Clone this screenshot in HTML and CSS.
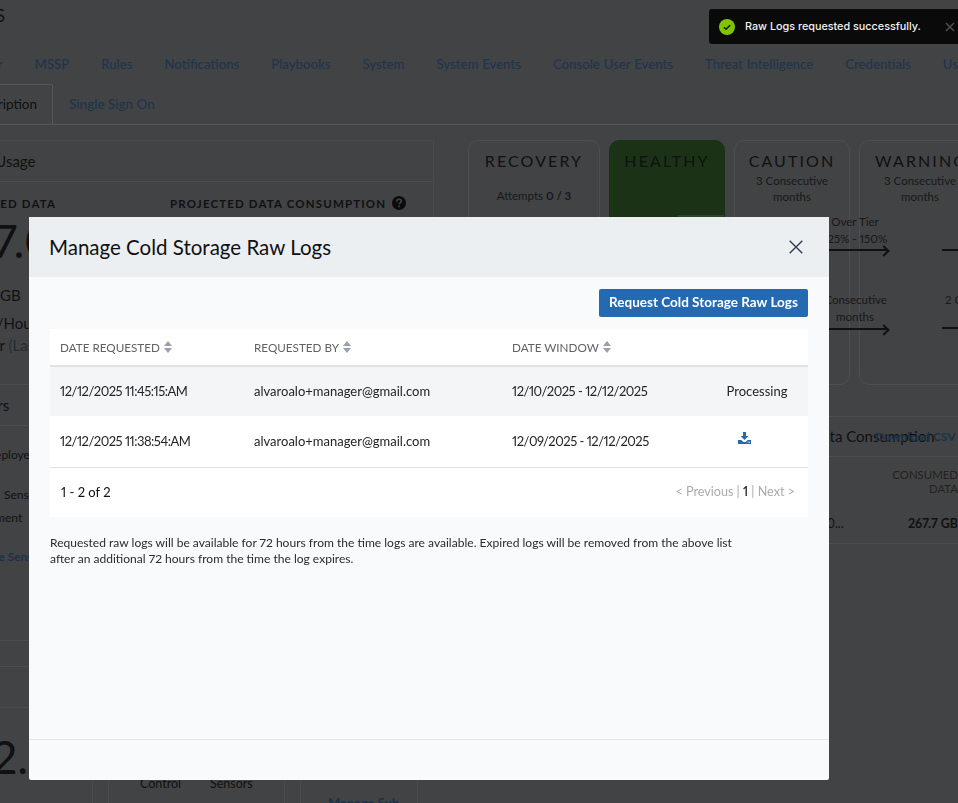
FILE: index.html
```html
<!DOCTYPE html>
<html lang="en">
<head>
<meta charset="utf-8">
<title>Manage Cold Storage Raw Logs</title>
<link rel="stylesheet" href="styles.css">
</head>
<body>
<div class="page">
  <header class="page-head">SETTINGS</header>
  <nav class="tabs">
    <a class="tab tab-first">Sensor</a><a class="tab">MSSP</a><a class="tab">Rules</a><a class="tab">Notifications</a><a class="tab">Playbooks</a><a class="tab">System</a><a class="tab">System Events</a><a class="tab">Console User Events</a><a class="tab">Threat Intelligence</a><a class="tab">Credentials</a><a class="tab">Users</a>
  </nav>
  <nav class="subtabs">
    <span class="subtab-active">Subscription</span><a class="tab subtab-link">Single Sign On</a>
  </nav>
  <main class="content">
    <section class="left">
      <div class="usage-panel">
        <div class="panel-title">Data Usage</div>
        <div class="metric-labels"><span class="metric-a">CONSUMED DATA</span><span class="metric-b">PROJECTED DATA CONSUMPTION</span>
          <svg class="help" width="14" height="14" viewBox="0 0 14 14"><circle cx="7" cy="7" r="7" fill="#0c0c0c"/><path d="M4.8 5.4c0-1.3 1-2.1 2.3-2.1 1.2 0 2.2.8 2.2 1.9 0 1.7-2.1 1.6-2.1 3.1" fill="none" stroke="#444" stroke-width="1.6"/><rect x="6.2" y="9.5" width="1.7" height="1.7" fill="#444"/></svg>
        </div>
        <div class="big-num">267.0</div>
        <div class="stub stub-gb">GB</div>
        <div class="stub stub-hour">GB/Hour</div>
        <div class="stub stub-last">Per Hour <span class="muted">(Last)</span></div>
      </div>
      <div class="sensors-head">Sensors</div>
      <div class="sensors-body">
        <div class="stub stub-dep">Deployed</div>
        <div class="stub stub-sens">Sensors</div>
        <div class="stub stub-ment">Management</div>
        <div class="stub stub-link">Manage Sensors</div>
      </div>
      <div class="strip strip-a"></div>
      <div class="strip strip-b"></div>
      <div class="bottom-row">
        <div class="big-two">12.0</div>
        <div class="mini-card mini-a"><span>Control</span><span>Sensors</span></div>
        <div class="mini-card mini-b"><strong>Manage Sub</strong></div>
      </div>
    </section>
    <section class="right">
      <div class="status-row">
        <div class="status"><h3>RECOVERY</h3><p class="attempts">Attempts <b>0 / 3</b></p></div>
        <div class="status status-healthy"><h3>HEALTHY</h3><i class="badge"></i></div>
        <div class="status"><h3>CAUTION</h3><p>3 Consecutive months</p></div>
        <div class="status status-warn"><h3>WARNING</h3><p>3 Consecutive months</p></div>
        <div class="flow flow-a"><span>Over Tier<br>125% - 150%</span><i class="arrow"></i></div>
        <div class="flow flow-b"><span>2 Consecutive<br>months</span><i class="arrow"></i></div>
        <i class="line line-a"></i>
        <i class="line line-b"></i>
        <span class="flow-c">2 Consecutive</span>
      </div>
      <div class="data-panel">
        <div class="data-head"><span>Data Consumption</span><a class="csv">Download CSV</a></div>
        <div class="data-cols"><span>CONSUMED<br>DATA</span></div>
        <div class="data-row"><span class="trunc">2025-10...</span><b>267.7 GB</b></div>
      </div>
    </section>
  </main>
</div>

<div class="toast">
  <svg width="16" height="16" viewBox="0 0 16 16"><circle cx="8" cy="8" r="8" fill="#7ec400"/><path d="M4.8 8.2l2.2 2.1 4.2-4.2" fill="none" stroke="#17230a" stroke-width="1.5"/></svg>
  <span class="toast-text">Raw Logs requested successfully.</span>
  <svg class="toast-x" width="10" height="10" viewBox="0 0 10 10"><path d="M1 1l8 8M9 1l-8 8" stroke="#4b4d50" stroke-width="1.6"/></svg>
</div>

<div class="backdrop">
  <div class="modal">
    <div class="modal-head">
      <h2>Manage Cold Storage Raw Logs</h2>
      <svg width="14" height="14" viewBox="0 0 14 14"><path d="M.7.7l12.6 12.6M13.3.7L.7 13.3" stroke="#2f3d4c" stroke-width="1.4"/></svg>
    </div>
    <div class="modal-body">
      <div class="actions"><button class="btn">Request Cold Storage Raw Logs</button></div>
      <div class="table-card">
        <table>
          <colgroup><col class="c1"><col class="c2"><col class="c3"><col class="c4"></colgroup>
          <thead>
            <tr>
              <th>DATE REQUESTED <svg class="sort" width="8" height="12" viewBox="0 0 8 12"><path d="M4 0l4 5H0zM4 12L0 7h8z"/></svg></th>
              <th>REQUESTED BY <svg class="sort" width="8" height="12" viewBox="0 0 8 12"><path d="M4 0l4 5H0zM4 12L0 7h8z"/></svg></th>
              <th>DATE WINDOW <svg class="sort" width="8" height="12" viewBox="0 0 8 12"><path d="M4 0l4 5H0zM4 12L0 7h8z"/></svg></th>
              <th></th>
            </tr>
          </thead>
          <tbody>
            <tr class="shade">
              <td class="num">12/12/2025 11:45:15:AM</td>
              <td>alvaroalo+manager@gmail.com</td>
              <td class="num">12/10/2025 - 12/12/2025</td>
              <td class="center">Processing</td>
            </tr>
            <tr>
              <td class="num">12/12/2025 11:38:54:AM</td>
              <td>alvaroalo+manager@gmail.com</td>
              <td class="num">12/09/2025 - 12/12/2025</td>
              <td class="center"><svg class="dl" width="13" height="12" viewBox="0 0 13 12"><path d="M5 0h3v4h2.500L6.500 8 2.500 4H5z" fill="#2569b1"/><path d="M0 8h3.200l2.300 2h2l2.300-2H13v4H0z" fill="#2569b1"/><rect x="9.500" y="9.700" width="1" height="1" fill="#fff"/><rect x="11" y="9.700" width="1" height="1" fill="#fff"/></svg></td>
            </tr>
          </tbody>
        </table>
        <div class="table-foot"><span>1 - 2 of 2</span><span class="pager">&lt; Previous | <b>1</b> | Next &gt;</span></div>
      </div>
      <p class="note">Requested raw logs will be available for 72 hours from the time logs are available. Expired logs will be removed from the above list<br>after an additional 72 hours from the time the log expires.</p>
    </div>
    <div class="modal-foot"></div>
  </div>
</div>
</body>
</html>
```
FILE: styles.css
```css
* { box-sizing: border-box; }
html, body { margin: 0; height: 100%; }
body {
  width: 958px; height: 803px; overflow: hidden;
  background: #424344; color: #101112;
  font-family: Lato, "Liberation Sans", sans-serif;
  font-variant-numeric: proportional-nums;
}
.page { margin-left: -100px; width: 1200px; }

.page-head { height: 45px; padding-top: 5px; font-size: 17px; width: 105px; text-align: right; white-space: nowrap; line-height: 22px; }

.tabs { display: flex; gap: 32px; height: 37px; align-items: center; white-space: nowrap; padding-left: 63px; }
.tab { font-size: 13.2px; font-weight: 500; word-spacing: 0.5px; color: #1f344e; }
.subtabs { display: flex; height: 43px; border-bottom: 1px solid #555657; align-items: flex-end; }
.subtab-active { width: 153px; height: 40px; border-right: 1px solid #555657; border-top: 1px solid #555657; font-size: 13.5px; line-height: 38px; text-align: right; padding-right: 15px; color: #0f1011; }
.subtab-link { margin-left: 16px; height: 40px; line-height: 40px; font-size: 13.5px; word-spacing: 0; }

.content { display: flex; padding-top: 15px; }
.left { width: 534px; flex: none; }
.right { margin-left: 34px; width: 640px; flex: none; }

.usage-panel { border: 1px solid #4a4b4c; border-left: 0; height: 245px; }
.panel-title { height: 41px; border-bottom: 1px solid #4a4b4c; font-size: 15px; line-height: 41px; padding-left: 60px; }
.metric-labels { display: flex; align-items: center; height: 20px; margin-top: 11px; font-size: 11.5px; font-weight: 700; letter-spacing: 1.15px; white-space: nowrap; }
.metric-a { width: 270px; padding-left: 42px; }
.metric-b { margin-right: 6px; }
.help { flex: none; }
.big-num { font-size: 46px; line-height: 50px; margin: 3px 0 0 41px; white-space: nowrap; }
.stub { font-size: 15px; line-height: 20px; white-space: nowrap; }
.stub-gb { margin-top: 19px; padding-left: 100px; }
.stub-hour { margin-top: 8px; padding-left: 76px; }
.stub-last { margin-top: 2px; padding-left: 46px; }
.muted { color: #2a2b2c; }

.sensors-head { height: 41px; border-bottom: 1px solid #4a4b4c; padding-left: 58px; font-size: 15px; line-height: 41px; }
.sensors-body { height: 215px; border-bottom: 1px solid #4a4b4c; padding-top: 21px; font-size: 12px; }
.sensors-body .stub { font-size: 12px; line-height: 16px; }
.stub-dep { padding-left: 86px; }
.stub-sens { margin-top: 24px; padding-left: 104px; }
.stub-ment { margin-top: 7px; padding-left: 53px; }
.stub-link { margin-top: 23px; padding-left: 62px; font-weight: 700; color: #1c3149; }
.strip { border-bottom: 1px solid #4a4b4c; }
.strip-a { height: 26px; }
.strip-b { height: 41px; }

.bottom-row { display: flex; height: 120px; }
.big-two { width: 193px; flex: none; padding: 24px 0 0 73px; font-size: 46px; line-height: 50px; border-right: 1px solid #4a4b4c; white-space: nowrap; overflow: hidden; }
.mini-card { margin-left: 15px; border: 1px solid #4a4b4c; height: 120px; }
.mini-a { width: 177px; display: flex; gap: 29px; padding: 67px 0 0 31px; font-size: 12.5px; }
.mini-b { width: 118px; padding: 86px 0 0 27px; font-size: 13px; color: #1c3149; white-space: nowrap; }

.status-row { display: flex; gap: 9px; height: 245px; position: relative; }
.status { width: 116px; height: 245px; border: 1px solid #4d4e4f; border-radius: 10px; text-align: center; padding-top: 11px; flex: none; position: relative; }
.status:first-child { width: 132px; }
.status-warn { width: 200px; text-align: left; padding-left: 15px; }
.status h3 { margin: 0; font-size: 16px; line-height: 18px; letter-spacing: 2.1px; font-weight: 400; color: #101112; white-space: nowrap; }
.status p { margin: 3px 14px 0; font-size: 11.5px; line-height: 16px; color: #17181a; }
.status-warn p { margin: 3px 0 0; width: 90px; text-align: center; }
.status .attempts { margin: 18px 0 0; }
.status-healthy { background: #1b3217; border-color: #1b3217; }
.badge { position: absolute; right: 0; top: 74px; width: 46px; height: 6px; background: #2a4527; }

.flow { position: absolute; left: 300px; width: 120px; font-size: 11.5px; line-height: 16.5px; text-align: center; color: #17181a; }
.flow-a { top: 74px; }
.flow-b { top: 152px; word-spacing: -8px; }
.flow-b .arrow { margin-top: 3px; }
.flow span { display: block; padding-left: 54px; white-space: nowrap; }
.arrow { display: block; position: relative; height: 2px; background: #101112; margin-top: 2px; }
.arrow::after { content: ""; position: absolute; right: 0; top: -2px; width: 6px; height: 6px; border-top: 2px solid #101112; border-right: 2px solid #101112; transform: rotate(45deg); }
.line { position: absolute; left: 474px; width: 40px; height: 2px; background: #101112; }
.line-a { top: 109px; }
.line-b { top: 187px; }
.flow-c { position: absolute; left: 477px; top: 152px; font-size: 11.5px; line-height: 16px; color: #17181a; white-space: nowrap; }

.data-panel { margin-top: 31px; height: 128px; border: 1px solid #4a4b4c; border-width: 1px 0; position: relative; }
.data-head { height: 40px; border-bottom: 1px solid #4a4b4c; font-size: 15px; line-height: 39px; padding-left: 343px; white-space: nowrap; position: relative; }
.csv { position: absolute; left: 407px; top: 0; font-size: 12px; font-weight: 700; color: #1c3149; }
.data-cols { padding: 11px 0 0; width: 490px; text-align: right; font-size: 11.4px; line-height: 14px; color: #222; }
.data-row { display: flex; justify-content: space-between; width: 490px; margin-top: 20px; font-size: 12.5px; }
.trunc { margin-left: 320px; }

.toast { position: fixed; top: 9px; right: 0; width: 249px; height: 35px; background: #0a0a0a; border-radius: 3px 0 0 3px; color: #f2f2f2; display: flex; align-items: center; padding-left: 10px; }
.toast-text { margin-left: 10px; margin-top: -1px; font-family: Inter, sans-serif; font-size: 10.8px; font-weight: 500; white-space: nowrap; }
.toast-x { margin-left: 24px; flex: none; }

.backdrop { position: fixed; inset: 0; padding: 217px 129px 23px 29px; }
.modal { height: 563px; display: flex; flex-direction: column; background: #f9fafc; border-radius: 2px; color: #1c1d1f; }
.modal-head { height: 60px; background: #eceff2; display: flex; align-items: center; justify-content: space-between; padding: 0 26px 0 20px; flex: none; }
.modal-head h2 { margin: 0; font-size: 20.5px; font-weight: 400; color: #111; }
.modal-body { flex: 1; padding: 12px 21px 0; }
.actions { display: flex; justify-content: flex-end; margin-bottom: 12px; }
.btn { width: 209px; height: 28px; padding: 0 0 2px; border: 0; border-radius: 2px; background: #2569b1; color: #fff; font: 700 13.5px Lato, sans-serif; }
.table-card { background: #fff; }
table { width: 758px; table-layout: fixed; border-collapse: collapse; }
.c1 { width: 194px; } .c2 { width: 258px; } .c3 { width: 204px; } .c4 { width: 102px; }
th { height: 37px; padding: 0 10px 1px; text-align: left; font-size: 11.7px; font-weight: 400; color: #5f6367; border-bottom: 2px solid #dfe1e5; white-space: nowrap; }
td { height: 50px; padding: 0 10px 1px; font-size: 13px; color: #232427; white-space: nowrap; }
.num { letter-spacing: -0.5px; }
.shade td { background: #f4f5f7; }
tbody tr:last-child td { border-bottom: 1px solid #dfe1e5; height: 51px; }
.center { text-align: center; }
.sort { fill: #9aa1ab; vertical-align: -1px; margin-left: 1px; }
.dl { vertical-align: 2px; margin-right: 26px; }
.table-foot { height: 49px; display: flex; align-items: center; justify-content: space-between; padding: 0 13px 1px 11px; font-size: 13px; color: #111; }
.pager { color: #a9abae; font-size: 12.6px; margin-bottom: 1px; }
.pager b { color: #1c2430; font-weight: 600; }
.note { margin: 18px 0 0; font-size: 12.05px; line-height: 16.8px; color: #2a2b2d; }
.modal-foot { height: 41px; border-top: 1px solid #e3e5e8; flex: none; }
```
